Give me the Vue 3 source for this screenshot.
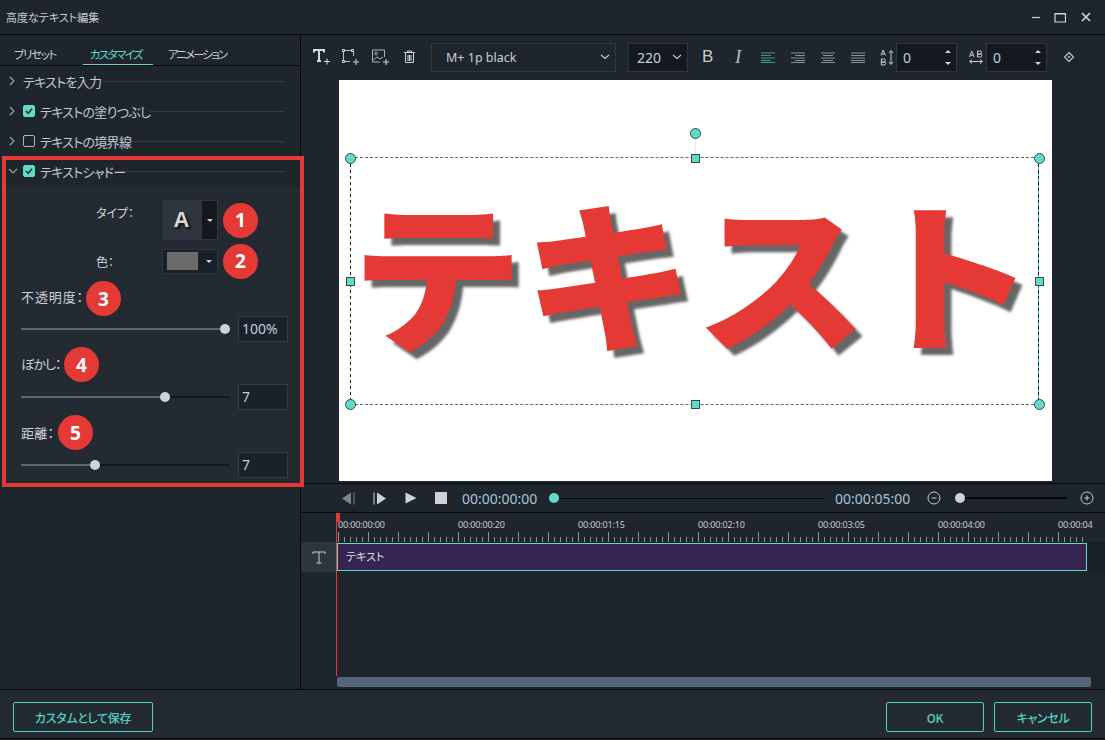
<template>
  <div class="app">
    <header class="titlebar">
      <span class="title">高度なテキスト編集</span>
      <div class="win-btns">
        <svg width="12" height="12" viewBox="0 0 12 12"><path d="M4 6.500h8" stroke="#cfd5da" stroke-width="1.2" /></svg>
        <svg width="12" height="12" viewBox="0 0 12 12"><path d="M1 2.500h10.500v8.500H1zM1 3h10.500" fill="none" stroke="#cfd5da" stroke-width="1.2" /></svg>
        <svg width="12" height="12" viewBox="0 0 12 12"><path d="M2 2l8 8M10 2l-8 8" stroke="#cfd5da" stroke-width="1.7" /></svg>
      </div>
    </header>

    <div class="main">
      <aside class="left">
        <nav class="tabs">
          <span class="tab tab-preset">プリセット</span>
          <span class="tab tab-custom">カスタマイズ</span>
          <span class="tab tab-anim">アニメーション</span>
        </nav>
        <div class="rows">
          <div v-for="row in rows" :key="row.label" class="row">
            <svg class="chev" width="8" height="10" viewBox="0 0 8 10"><path d="M2 1l4 4-4 4" fill="none" stroke="#9aa3ab" stroke-width="1.2" /></svg>
            <span v-if="row.check !== null" class="check" :class="{ on: row.check }">
              <svg v-if="row.check" width="12" height="12" viewBox="0 0 12 12"><path d="M3 6l2.200 2.400L9 3.800" fill="none" stroke="#1e252d" stroke-width="1.600" /></svg>
            </span>
            <span class="row-label">{{ row.label }}</span>
            <span class="row-line"></span>
          </div>
        </div>

        <section class="shadow-box">
          <div class="row shadow-head">
            <svg class="chev" width="10" height="8" viewBox="0 0 10 8"><path d="M1 2l4 4 4-4" fill="none" stroke="#9aa3ab" stroke-width="1.2" /></svg>
            <span class="check on"><svg width="12" height="12" viewBox="0 0 12 12"><path d="M3 6l2.200 2.400L9 3.800" fill="none" stroke="#1e252d" stroke-width="1.600" /></svg></span>
            <span class="row-label">テキストシャドー</span>
            <span class="row-line"></span>
          </div>
          <div class="shadow-body">
            <div class="pick-row type-row">
              <span class="pick-label">タイプ：</span>
              <div class="type-box">
                <span class="type-a">A</span>
                <span class="type-arrow"><i class="caret"></i></span>
              </div>
              <span class="badge">1</span>
            </div>
            <div class="pick-row color-row">
              <span class="pick-label">色：</span>
              <div class="color-box">
                <span class="color-swatch"></span>
                <i class="caret"></i>
              </div>
              <span class="badge">2</span>
            </div>
            <template v-for="s in sliders" :key="s.label">
              <div class="slider-label" :class="s.cls">
                <span class="slider-name" :style="{ width: s.labelWidth + 'px' }">{{ s.label }}</span>
                <span class="badge">{{ s.badge }}</span>
              </div>
              <div class="slider-row">
                <div class="track">
                  <div class="fill" :style="{ width: s.pos + 'px' }"></div>
                  <div class="thumb" :style="{ left: s.pos + 'px' }"></div>
                </div>
                <div class="num">{{ s.value }}</div>
              </div>
            </template>
          </div>
        </section>
      </aside>

      <div class="right">
        <div class="toolbar">
          <svg class="ic ic-t" width="18" height="18" viewBox="0 0 18 18"><path d="M1 4.500V2h10v2.500M6 2v11M4 13h4" fill="none" stroke="#d5dade" stroke-width="2" /><path d="M11 13.500h6M14 10.500v6" stroke="#d5dade" stroke-width="1" /></svg>
          <svg class="ic ic-box" width="19" height="18" viewBox="0 0 19 18"><path d="M4 2.500h6M2.500 4v8M12.500 4v4M4 13.500h5" fill="none" stroke="#b9c0c6" stroke-width="1" /><path d="M1.500 1.500h2v2h-2zM10.500 1.500h2v2h-2zM1.500 12.500h2v2h-2z" fill="none" stroke="#d5dade" /><path d="M12 14h6M15 11v6" stroke="#d5dade" /></svg>
          <svg class="ic ic-img" width="19" height="18" viewBox="0 0 19 18"><path d="M9 14H1.500V2h12v7" fill="none" stroke="#aab1b8" /><circle cx="5" cy="5.500" r="1.300" fill="none" stroke="#aab1b8" /><path d="M2 12l4-3 3 2 3-2" fill="none" stroke="#aab1b8" /><path d="M12 14h6M15 11v6" stroke="#d5dade" /></svg>
          <svg class="ic ic-trash" width="13" height="14" viewBox="0 0 13 14"><path d="M1 2.500h11M4.500 2.500V1h4v1.500M2.500 3v9.500h8V3M5 5v6M6.500 5v6M8 5v6" fill="none" stroke="#cfd5da" stroke-width="1" /></svg>

          <div class="select font-select"><span>M+ 1p black</span><svg width="10" height="6" viewBox="0 0 10 6"><path d="M1 1l4 3.500L9 1" fill="none" stroke="#c5ccd2" stroke-width="1.100" /></svg></div>
          <div class="select size-select"><span>220</span><svg width="10" height="6" viewBox="0 0 10 6"><path d="M1 1l4 3.500L9 1" fill="none" stroke="#c5ccd2" stroke-width="1.100" /></svg></div>

          <span class="fmt-b">B</span>
          <span class="fmt-i">I</span>
          <svg v-for="(a, i) in aligns" :key="i" class="ic-align" width="14" height="11" viewBox="0 0 14 11">
            <path :d="a" fill="none" :stroke="i === 0 ? '#3f9c8b' : '#8b9298'" stroke-width="1" />
          </svg>

          <svg class="ic-height" width="14" height="17" viewBox="0 0 14 17"><path d="M1 6.500L3.200 1l2.200 5.500M1.800 5h2.800M1.300 10h2.600a1.400 1.400 0 0 1 0 3H1.300zM1.300 13h2.800a1.500 1.500 0 0 1 0 3H1.300zM11 2v13M9 4l2-2.500L13 4M9 13l2 2.500 2-2.500" fill="none" stroke="#c5ccd2" stroke-width="1" /></svg>
          <div class="spin"><span>0</span><i class="up"></i><i class="down"></i></div>
          <svg class="ic-width" width="14" height="15" viewBox="0 0 14 15"><path d="M0.500 7L2.800 1 5 7M1.300 5.200h2.800M8.500 1h2.600a1.400 1.400 0 0 1 0 3H8.500zM8.500 4h2.800a1.500 1.500 0 0 1 0 3H8.500zM1 11.500h12M3 9.500l-2.500 2 2.500 2M11 9.500l2.500 2-2.500 2" fill="none" stroke="#c5ccd2" stroke-width="1" /></svg>
          <div class="spin"><span>0</span><i class="up"></i><i class="down"></i></div>
          <svg class="ic-key" width="12" height="12" viewBox="0 0 12 12"><path d="M6 1.500L10.500 6 6 10.500 1.500 6z" fill="none" stroke="#c5ccd2" stroke-width="1.100" /><path d="M4.800 6h2.400M6 4.800v2.400" stroke="#c5ccd2" /></svg>
        </div>

        <div class="preview">
          <div class="canvas">
            <div class="frame">
              <div class="bigtext">
                <span>テ</span><span>キ</span><span>ス</span><span class="g-to">ト</span>
              </div>
              <span class="rot-line"></span>
              <span class="h-circle hc-rot"></span>
              <span class="h-circle hc-tl"></span>
              <span class="h-circle hc-tr"></span>
              <span class="h-circle hc-bl"></span>
              <span class="h-circle hc-br"></span>
              <span class="h-square hs-t"></span>
              <span class="h-square hs-b"></span>
              <span class="h-square hs-l"></span>
              <span class="h-square hs-r"></span>
            </div>
          </div>
        </div>

        <div class="player">
          <svg class="p-prev" width="14" height="13" viewBox="0 0 14 13"><path d="M10 0.500v12L1 6.500z" fill="#7b848c" /><path d="M13 0.500v12" stroke="#7b848c" /></svg>
          <svg class="p-next" width="14" height="13" viewBox="0 0 14 13"><path d="M4 0.500v12l9-6z" fill="#cdd3d8" /><path d="M1 0.500v12" stroke="#cdd3d8" /></svg>
          <svg class="p-play" width="12" height="12" viewBox="0 0 12 12"><path d="M0.500 0.500v11L11.500 6z" fill="#cdd3d8" /></svg>
          <span class="p-stop"></span>
          <span class="time t-now">00:00:00:00</span>
          <div class="seek"><span class="seek-thumb"></span></div>
          <span class="time t-end">00:00:05:00</span>
          <svg class="p-minus" width="14" height="14" viewBox="0 0 14 14"><circle cx="7" cy="7" r="6" fill="none" stroke="#c5ccd2" /><path d="M4.500 7h5" stroke="#c5ccd2" /></svg>
          <div class="zoom"><span class="zoom-thumb"></span></div>
          <svg class="p-plus" width="14" height="14" viewBox="0 0 14 14"><circle cx="7" cy="7" r="6" fill="none" stroke="#c5ccd2" /><path d="M4.500 7h5M7 4.500v5" stroke="#c5ccd2" /></svg>
        </div>

        <div class="timeline">
          <div class="ruler">
            <div class="ruler-labels">
              <span v-for="t in ticks" :key="t" class="ruler-label">{{ t }}</span>
            </div>
            <div class="ruler-ticks"></div>
          </div>
          <div class="track-row">
            <div class="track-head">
              <svg width="14" height="13" viewBox="0 0 14 13"><path d="M1 3V1h12v2M7 1v11M4.500 12h5" fill="none" stroke="#c5ccd2" stroke-width="1" /></svg>
            </div>
            <div class="clip">テキスト</div>
          </div>
          <div class="track-empty"></div>
          <div class="hscroll-wrap"><div class="hscroll"></div></div>
          <span class="playhead"></span>
        </div>
      </div>
    </div>

    <footer class="footer">
      <button class="btn btn-save">カスタムとして保存</button>
      <button class="btn btn-ok">OK</button>
      <button class="btn btn-cancel">キャンセル</button>
    </footer>
  </div>
</template>

<script setup>
const rows = [
  { label: 'テキストを入力', check: null },
  { label: 'テキストの塗りつぶし', check: true },
  { label: 'テキストの境界線', check: false }
]

const sliders = [
  { label: '不透明度：', badge: 3, value: '100%', pos: 204, labelWidth: 65, cls: 'first' },
  { label: 'ぼかし：', badge: 4, value: '7', pos: 144, labelWidth: 42, cls: 'blur' },
  { label: '距離：', badge: 5, value: '7', pos: 74, labelWidth: 37, cls: 'dist' }
]

const aligns = [
  'M0 1h14M0 3.500h10M0 6h14M0 8.500h10M0 10.500h14',
  'M0 1h14M4 3.500h10M0 6h14M4 8.500h10M0 10.500h14',
  'M0 1h14M2 3.500h10M0 6h14M2 8.500h10M0 10.500h14',
  'M0 1h14M0 3.500h14M0 6h14M0 8.500h14M0 10.500h14'
]

const ticks = ['00:00:00:00', '00:00:00:20', '00:00:01:15', '00:00:02:10', '00:00:03:05', '00:00:04:00', '00:00:04']
</script>

<style>
html,
body {
  margin: 0;
  background: #1e252d;
}
</style>

<style scoped>
.app {
  width: 1105px;
  height: 740px;
  display: flex;
  flex-direction: column;
  overflow: hidden;
  background: #1e252d;
  color: #cdd3d8;
  font-family: 'Noto Sans CJK JP', 'Noto Sans', sans-serif;
  font-size: 12px;
  font-feature-settings: 'palt';
}

.titlebar {
  height: 34px;
  flex: none;
  display: flex;
  align-items: center;
  justify-content: space-between;
  padding: 0 13px 0 6px;
  border-bottom: 1px solid #05070a;
}
.title {
  font-size: 11px;
  color: #c8ced3;
}
.win-btns {
  display: flex;
  gap: 14px;
  align-items: center;
}

.main {
  flex: 1;
  display: flex;
  min-height: 0;
}

/* left panel */
.left {
  width: 300px;
  flex: none;
  border-right: 1px solid #05070a;
}
.tabs {
  height: 30px;
  display: flex;
  border-bottom: 1px solid #05070a;
}
.tab {
  font-size: 11.5px;
  line-height: 39px;
  letter-spacing: -1.4px;
  color: #c8ced3;
  white-space: nowrap;
}
.tab-preset {
  margin-left: 14px;
}
.tab-custom {
  margin-left: 27px;
  width: 70px;
  box-sizing: border-box;
  padding-left: 7px;
  letter-spacing: -1.6px;
  color: #5fdcc8;
  border-bottom: 1px solid #5fdcc8;
  height: 30px;
}
.tab-anim {
  margin-left: 15px;
  letter-spacing: -1.9px;
}

.rows {
  height: 90px;
}
.row {
  height: 30px;
  display: flex;
  align-items: center;
  padding-left: 8px;
}
.chev {
  width: 8px;
  flex: none;
  margin-right: 7px;
}
.check {
  width: 12px;
  height: 12px;
  box-sizing: border-box;
  border: 1px solid #aeb5bb;
  border-radius: 2px;
  margin-right: 5px;
  flex: none;
  display: flex;
}
.check.on {
  background: #5fdcc8;
  border-color: #5fdcc8;
}
.check svg {
  margin: -1px;
}
.row-label {
  font-size: 13px;
  letter-spacing: -0.7px;
  color: #c3c9ce;
  white-space: nowrap;
}
.row-line {
  flex: 1;
  height: 1px;
  background: #333a43;
  margin-right: 16px;
}

.shadow-box {
  width: 302px;
  margin-left: 2px;
  border: 4px solid #e53935;
  box-sizing: border-box;
  height: 331px;
  position: relative;
}
.shadow-head {
  height: 27px;
  padding-left: 2px;
  padding-bottom: 5px;
  box-sizing: border-box;
}
.shadow-head .chev {
  width: 10px;
  margin-right: 5px;
}
.shadow-head .row-line {
  margin-right: 14px;
}
.shadow-body {
  height: 296px;
  padding-top: 13px;
  box-sizing: border-box;
  background: #232a32;
}

.pick-row {
  display: flex;
  align-items: center;
  padding-left: 90px;
}
.type-row {
  height: 40px;
}
.color-row {
  height: 26px;
  margin-top: 8px;
}
.pick-label {
  width: 67px;
  flex: none;
  font-size: 12px;
}
.type-row .pick-label {
  padding-bottom: 16px;
}
.color-row .pick-label {
  width: 66px;
}
.type-box {
  width: 55px;
  height: 40px;
  box-sizing: border-box;
  border: 1px solid #313843;
  display: flex;
  flex: none;
}
.type-a {
  width: 38px;
  padding-right: 3px;
  box-sizing: border-box;
  background: #2e353e;
  color: #d8d8d8;
  font-family: 'Liberation Sans', sans-serif;
  font-weight: 700;
  font-size: 22px;
  line-height: 38px;
  text-align: center;
  text-shadow: 2px 2px 2px #0c0f12;
}
.type-arrow {
  flex: 1;
  background: #14181e;
  display: flex;
  align-items: center;
  justify-content: center;
}
.caret {
  width: 0;
  height: 0;
  border-left: 3px solid transparent;
  border-right: 3px solid transparent;
  border-top: 3px solid #cdd3d8;
}
.color-box {
  width: 56px;
  height: 25px;
  box-sizing: border-box;
  border: 1px solid #2d343e;
  background: #1a2027;
  display: flex;
  align-items: center;
  padding-left: 4px;
  gap: 8px;
  flex: none;
}
.color-swatch {
  width: 31px;
  height: 18px;
  background: #6b6b6b;
}
.badge {
  width: 35px;
  height: 35px;
  border-radius: 50%;
  background: #e53935;
  color: #fff;
  font-family: 'Noto Sans', sans-serif;
  font-weight: 700;
  font-size: 19px;
  display: flex;
  align-items: center;
  justify-content: center;
  flex: none;
}
.pick-row .badge {
  margin-left: 5px;
}

.slider-label {
  height: 35px;
  margin-top: 5px;
  padding-left: 15px;
  display: flex;
  align-items: center;
}
.slider-label.first {
  margin-top: 7px;
}
.slider-name {
  font-size: 13px;
  white-space: nowrap;
  padding-bottom: 3px;
}
.first .slider-name {
  letter-spacing: 0.9px;
  padding-bottom: 4px;
}
.blur .slider-name {
  letter-spacing: -1px;
}
.dist .slider-name {
  letter-spacing: 0.3px;
  padding-bottom: 1px;
}
.blur .badge {
  margin-left: 1px;
}
.slider-row {
  height: 26px;
  display: flex;
  align-items: center;
  padding-left: 15px;
  margin-top: 2px;
}
.slider-label.first + .slider-row {
  margin-top: 0;
}
.track {
  width: 209px;
  height: 2px;
  background: #14181c;
  position: relative;
  margin-right: 8px;
  flex: none;
}
.fill {
  height: 100%;
  background: #5a6672;
}
.thumb {
  position: absolute;
  top: -4px;
  width: 10px;
  height: 10px;
  margin-left: -5px;
  border-radius: 50%;
  background: #ccd3da;
}
.num {
  width: 50px;
  height: 26px;
  box-sizing: border-box;
  border: 1px solid #333c46;
  background: #1a2129;
  font-family: 'Noto Sans', sans-serif;
  font-size: 14px;
  line-height: 24px;
  padding-left: 3px;
  color: #bcd0e0;
}

/* right side */
.right {
  flex: 1;
  min-width: 0;
  display: flex;
  flex-direction: column;
}
.toolbar {
  height: 45px;
  flex: none;
  display: flex;
  align-items: center;
  padding-bottom: 1px;
  box-sizing: border-box;
}
.ic-t {
  margin-left: 12px;
}
.ic-box {
  margin-left: 10px;
}
.ic-img {
  margin-left: 11px;
}
.ic-trash {
  margin-left: 13px;
}
.select {
  height: 29px;
  box-sizing: border-box;
  border: 1px solid #2f3640;
  display: flex;
  align-items: center;
  justify-content: space-between;
  font-family: 'Noto Sans', sans-serif;
  font-size: 12.5px;
  color: #c3d0da;
  font-feature-settings: normal;
}
.font-select {
  width: 185px;
  margin-left: 15px;
  padding: 0 5px 0 14px;
}
.size-select {
  width: 60px;
  margin-left: 12px;
  padding: 0 5px 0 8px;
  background: #14181f;
  font-size: 14px;
}
.fmt-b {
  font-family: 'Liberation Sans', sans-serif;
  font-size: 17px;
  color: #c5ccd2;
  margin-left: 14px;
  width: 12px;
}
.fmt-i {
  font-family: 'Liberation Serif', serif;
  font-style: italic;
  font-size: 19px;
  color: #b5bcc2;
  margin-left: 21px;
  width: 8px;
}
.ic-align {
  margin-left: 16px;
}
.fmt-i + .ic-align {
  margin-left: 18px;
}
.ic-height {
  margin-left: 15px;
}
.spin {
  width: 61px;
  height: 29px;
  box-sizing: border-box;
  border: 1px solid #2f3640;
  background: #14181f;
  position: relative;
  margin-left: 2px;
  font-family: 'Noto Sans', sans-serif;
  font-size: 14px;
  line-height: 27px;
  padding-left: 6px;
  color: #bcd0e0;
}
.spin i {
  position: absolute;
  right: 5px;
  width: 0;
  height: 0;
  border-left: 3px solid transparent;
  border-right: 3px solid transparent;
}
.spin .up {
  top: 6px;
  border-bottom: 3px solid #cdd3d8;
}
.spin .down {
  bottom: 6px;
  border-top: 3px solid #cdd3d8;
}
.ic-width {
  margin-left: 12px;
}
.ic-width + .spin {
  margin-left: 3px;
}
.ic-key {
  margin-left: 16px;
}

.preview {
  height: 403px;
  flex: none;
  padding-left: 38px;
  border-bottom: 1px solid #05070a;
}
.canvas {
  width: 713px;
  height: 401px;
  background: #fff;
  padding: 77px 0 0 11px;
  box-sizing: border-box;
}
.frame {
  width: 689px;
  height: 246px;
  position: relative;
  border-top: 1px dashed #666;
  border-bottom: 1px dashed #666;
  background:
    repeating-linear-gradient(to bottom, #111 0 3px, transparent 3px 6px) left top / 1px 100% no-repeat,
    repeating-linear-gradient(to bottom, #111 0 3px, #19c4d0 3px 6px) right top / 1px 100% no-repeat;
}
.bigtext {
  display: flex;
  height: 246px;
  align-items: center;
  padding: 0 0 24px 1px;
  box-sizing: border-box;
  font-weight: 900;
  font-size: 172px;
  line-height: 1;
  color: #e53935;
  white-space: nowrap;
  font-feature-settings: normal;
  text-shadow: 7px 7px 3px #666;
  transform: scaleY(0.94);
}
.g-to {
  margin-left: -3px;
}
.rot-line {
  position: absolute;
  left: 345px;
  top: -26px;
  width: 1px;
  height: 26px;
  background: #e8e8e8;
}
.h-circle,
.h-square {
  position: absolute;
  background: #5fdcc8;
  border: 1px solid #3c4a4c;
  box-sizing: border-box;
}
.h-circle {
  width: 11px;
  height: 11px;
  margin: -5.5px 0 0 -5.5px;
  border-radius: 50%;
}
.h-square {
  width: 9px;
  height: 9px;
  margin: -4.5px 0 0 -4.5px;
}
.hc-rot {
  left: 345px;
  top: -25px;
}
.hc-tl {
  left: 0;
  top: 0;
}
.hc-tr {
  left: 689px;
  top: 0;
}
.hc-bl {
  left: 0;
  top: 246px;
}
.hc-br {
  left: 689px;
  top: 246px;
}
.hs-t {
  left: 345px;
  top: 0;
}
.hs-b {
  left: 345px;
  top: 246px;
}
.hs-l {
  left: 0;
  top: 123px;
}
.hs-r {
  left: 689px;
  top: 123px;
}

.player {
  height: 28px;
  flex: none;
  display: flex;
  align-items: center;
  border-bottom: 1px solid #05070a;
}
.p-prev {
  margin-left: 40px;
}
.p-next {
  margin-left: 18px;
}
.p-play {
  margin-left: 18px;
}
.p-stop {
  width: 12px;
  height: 12px;
  background: #cdd3d8;
  margin-left: 18px;
}
.time {
  font-family: 'Noto Sans', sans-serif;
  font-size: 14px;
  color: #a9c3d8;
  width: 76px;
  white-space: nowrap;
  font-feature-settings: normal;
}
.t-now {
  margin-left: 15px;
}
.seek {
  width: 270px;
  height: 1px;
  background: #0a0d10;
  margin-left: 16px;
  position: relative;
}
.seek-thumb {
  position: absolute;
  left: -5px;
  top: -5px;
  width: 10px;
  height: 10px;
  border-radius: 50%;
  background: #5fdcc8;
}
.t-end {
  margin-left: 11px;
}
.p-minus {
  margin-left: 16px;
}
.zoom {
  width: 107px;
  height: 2px;
  background: #05070a;
  margin-left: 19px;
  position: relative;
}
.zoom-thumb {
  position: absolute;
  left: -5px;
  top: -4px;
  width: 10px;
  height: 10px;
  border-radius: 50%;
  background: #ccd3da;
}
.p-plus {
  margin-left: 13px;
}

.timeline {
  flex: 1;
  min-height: 0;
  position: relative;
  display: flex;
  flex-direction: column;
}
.ruler {
  height: 29px;
  flex: none;
  padding-left: 37px;
}
.ruler-labels {
  display: flex;
  height: 18px;
  align-items: flex-end;
}
.ruler-label {
  width: 120px;
  flex: none;
  font-family: 'Noto Sans', sans-serif;
  font-size: 9px;
  letter-spacing: -0.15px;
  line-height: 13px;
  color: #c8ced3;
  font-feature-settings: normal;
  white-space: nowrap;
}
.ruler-ticks {
  width: 750px;
  height: 11px;
  background:
    repeating-linear-gradient(to right, #7f97a8 0 1px, transparent 1px 30px) left bottom / 100% 10px no-repeat,
    repeating-linear-gradient(to right, #7f97a8 0 1px, transparent 1px 6px) left bottom / 100% 5px no-repeat;
}
.track-row {
  height: 30px;
  flex: none;
  display: flex;
  background: #1a2027;
  padding-right: 18px;
}
.track-head {
  width: 35px;
  flex: none;
  background: #2e353e;
  display: flex;
  align-items: center;
  justify-content: center;
  margin-right: 1px;
}
.clip {
  width: 751px;
  margin: 1px 0;
  box-sizing: border-box;
  border: 1px solid #5fdcc8;
  background: #352651;
  font-size: 11px;
  line-height: 24px;
  padding-left: 8px;
  color: #dcdfe3;
}
.track-empty {
  height: 105px;
  flex: none;
}
.hscroll-wrap {
  padding-left: 36px;
}
.hscroll {
  width: 754px;
  height: 10px;
  background: #566579;
  border-radius: 2px;
}
.playhead {
  position: absolute;
  left: 35px;
  top: 0;
  width: 1px;
  height: 163px;
  background: #e53935;
}
.playhead::before {
  content: '';
  position: absolute;
  left: 0;
  top: 0;
  width: 4px;
  height: 9px;
  background: #e53935;
}

.footer {
  height: 50px;
  box-sizing: border-box;
  flex: none;
  margin-bottom: 1px;
  padding: 6px 13px 0;
  background: #232a32;
  border-top: 1px solid #05070a;
  border-bottom: 1px solid #05070a;
  display: flex;
  align-items: center;
}
.btn {
  height: 30px;
  background: transparent;
  border: 1px solid #4fd4c2;
  border-radius: 2px;
  color: #4fd4c2;
  font-family: inherit;
  font-feature-settings: inherit;
  font-size: 12px;
  font-weight: 500;
  letter-spacing: -0.3px;
  padding: 0;
}
.btn-save {
  width: 140px;
  margin-right: auto;
}
.btn-ok {
  width: 98px;
  margin-right: 10px;
}
.btn-cancel {
  width: 98px;
}
</style>
